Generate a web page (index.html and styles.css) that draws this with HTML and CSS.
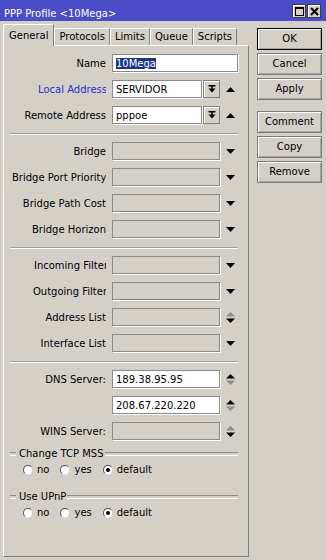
FILE: index.html
```html
<!DOCTYPE html>
<html>
<head>
<meta charset="utf-8">
<title>PPP Profile</title>
<link rel="stylesheet" href="styles.css">
</head>
<body>
<div class="titlebar">
  <span class="title">PPP Profile &lt;10Mega&gt;</span>
  <div class="tbtns">
    <span class="tbtn"><svg width="9" height="9" viewBox="0 0 9 9"><rect x="0.5" y="0.5" width="8" height="8" fill="none" stroke="#000" stroke-width="1"/><rect x="0" y="0" width="9" height="2" fill="#000"/></svg></span>
    <span class="tbtn"><svg width="9" height="9" viewBox="0 0 9 9"><path d="M1 1 L8 8 M8 1 L1 8" stroke="#000" stroke-width="2" fill="none"/></svg></span>
  </div>
</div>
<div class="main">
  <div class="left">
    <div class="tabs">
      <div class="tab active">General</div>
      <div class="tab">Protocols</div>
      <div class="tab">Limits</div>
      <div class="tab">Queue</div>
      <div class="tab">Scripts</div>
    </div>
    <div class="panel">
      <div class="row">
        <div class="lbl"><span>Name</span></div>
        <div class="field wide"><span class="sel">10Mega</span></div>
      </div>
      <div class="row">
        <div class="lbl blue"><span class="cut1">Local Address</span></div>
        <div class="field short">SERVIDOR</div>
        <div class="ddbtn"><svg width="8" height="8" viewBox="0 0 8 8"><rect x="0.5" y="0" width="7" height="1.5" fill="#000"/><rect x="3.25" y="1" width="1.5" height="3" fill="#000"/><polygon points="0.5,3.5 7.5,3.5 4,7.5" fill="#000"/></svg></div>
        <div class="arr"><svg width="9" height="5" viewBox="0 0 9 5"><polygon points="0,5 4.5,0 9,5" fill="#000"/></svg></div>
      </div>
      <div class="row">
        <div class="lbl"><span>Remote Address</span></div>
        <div class="field short">pppoe</div>
        <div class="ddbtn"><svg width="8" height="8" viewBox="0 0 8 8"><rect x="0.5" y="0" width="7" height="1.5" fill="#000"/><rect x="3.25" y="1" width="1.5" height="3" fill="#000"/><polygon points="0.5,3.5 7.5,3.5 4,7.5" fill="#000"/></svg></div>
        <div class="arr"><svg width="9" height="5" viewBox="0 0 9 5"><polygon points="0,5 4.5,0 9,5" fill="#000"/></svg></div>
      </div>
      <div class="sep"></div>
      <div class="row">
        <div class="lbl"><span>Bridge</span></div>
        <div class="field mid off"></div>
        <div class="arr"><svg width="9" height="5" viewBox="0 0 9 5"><polygon points="0,0 9,0 4.5,5" fill="#000"/></svg></div>
      </div>
      <div class="row">
        <div class="lbl"><span>Bridge Port Priority</span></div>
        <div class="field mid off"></div>
        <div class="arr"><svg width="9" height="5" viewBox="0 0 9 5"><polygon points="0,0 9,0 4.5,5" fill="#000"/></svg></div>
      </div>
      <div class="row">
        <div class="lbl"><span>Bridge Path Cost</span></div>
        <div class="field mid off"></div>
        <div class="arr"><svg width="9" height="5" viewBox="0 0 9 5"><polygon points="0,0 9,0 4.5,5" fill="#000"/></svg></div>
      </div>
      <div class="row">
        <div class="lbl"><span>Bridge Horizon</span></div>
        <div class="field mid off"></div>
        <div class="arr"><svg width="9" height="5" viewBox="0 0 9 5"><polygon points="0,0 9,0 4.5,5" fill="#000"/></svg></div>
      </div>
      <div class="sep"></div>
      <div class="row">
        <div class="lbl"><span class="cut2">Incoming Filter</span></div>
        <div class="field mid off"></div>
        <div class="arr"><svg width="9" height="5" viewBox="0 0 9 5"><polygon points="0,0 9,0 4.5,5" fill="#000"/></svg></div>
      </div>
      <div class="row">
        <div class="lbl"><span class="cut1">Outgoing Filter</span></div>
        <div class="field mid off"></div>
        <div class="arr"><svg width="9" height="5" viewBox="0 0 9 5"><polygon points="0,0 9,0 4.5,5" fill="#000"/></svg></div>
      </div>
      <div class="row">
        <div class="lbl"><span>Address List</span></div>
        <div class="field mid off"></div>
        <div class="arr"><svg width="9" height="11" viewBox="0 0 9 11"><polygon points="0,4.5 4.5,0 9,4.5" class="gray"/><polygon points="0,6.5 9,6.5 4.5,11" fill="#000"/></svg></div>
      </div>
      <div class="row">
        <div class="lbl"><span>Interface List</span></div>
        <div class="field mid off"></div>
        <div class="arr"><svg width="9" height="5" viewBox="0 0 9 5"><polygon points="0,0 9,0 4.5,5" fill="#000"/></svg></div>
      </div>
      <div class="sep"></div>
      <div class="row">
        <div class="lbl"><span>DNS Server:</span></div>
        <div class="field mid">189.38.95.95</div>
        <div class="arr"><svg width="9" height="11" viewBox="0 0 9 11"><polygon points="0,4.5 4.5,0 9,4.5" fill="#000"/><polygon points="0,6.5 9,6.5 4.5,11" class="gray"/></svg></div>
      </div>
      <div class="row">
        <div class="lbl"><span></span></div>
        <div class="field mid">208.67.220.220</div>
        <div class="arr"><svg width="9" height="11" viewBox="0 0 9 11"><polygon points="0,4.5 4.5,0 9,4.5" fill="#000"/><polygon points="0,6.5 9,6.5 4.5,11" class="gray"/></svg></div>
      </div>
      <div class="row">
        <div class="lbl"><span>WINS Server:</span></div>
        <div class="field mid off"></div>
        <div class="arr"><svg width="9" height="11" viewBox="0 0 9 11"><polygon points="0,4.5 4.5,0 9,4.5" class="gray"/><polygon points="0,6.5 9,6.5 4.5,11" fill="#000"/></svg></div>
      </div>
      <div class="grp">
        <div class="gtitle">Change TCP MSS</div>
        <div class="radios">
          <span class="opt"><span class="radio"></span>no</span>
          <span class="opt"><span class="radio"></span>yes</span>
          <span class="opt"><span class="radio on"></span>default</span>
        </div>
      </div>
      <div class="grp">
        <div class="gtitle">Use UPnP</div>
        <div class="radios">
          <span class="opt"><span class="radio"></span>no</span>
          <span class="opt"><span class="radio"></span>yes</span>
          <span class="opt"><span class="radio on"></span>default</span>
        </div>
      </div>
    </div>
  </div>
  <div class="right">
    <div class="btn def">OK</div>
    <div class="btn">Cancel</div>
    <div class="btn">Apply</div>
    <div class="btn gapped">Comment</div>
    <div class="btn">Copy</div>
    <div class="btn">Remove</div>
  </div>
</div>
</body>
</html>
```
FILE: styles.css
```css
* { box-sizing: border-box; }
html, body { margin: 0; padding: 0; }
body {
  width: 326px;
  height: 560px;
  overflow: hidden;
  background: #d4d0c8;
  font-family: "DejaVu Sans", sans-serif;
  font-size: 10px;
  color: #000;
}

.titlebar {
  height: 21px;
  background: #4b4cc8;
  display: flex;
  justify-content: space-between;
  align-items: flex-start;
  padding: 0 5px 0 4px;
}
.title {
  color: #fff;
  line-height: 12px;
  margin-top: 8px;
  white-space: nowrap;
}
.tbtns {
  display: flex;
  gap: 1px;
  margin-top: 4px;
}
.tbtn {
  width: 14px;
  height: 14px;
  background: #d4d0c8;
  border: 1px solid #404040;
  box-shadow: inset 1px 1px 0 #fff;
  display: flex;
  align-items: center;
  justify-content: center;
}

.main {
  display: flex;
  padding: 3px 0 0 3px;
}
.left { width: 246px; }

.tabs {
  display: flex;
  align-items: flex-end;
  height: 21px;
}
.tab {
  height: 17px;
  line-height: 15px;
  padding: 0 4px;
  border-top: 1px solid #fff;
  border-left: 1px solid #fff;
  border-right: 1px solid #808080;
  white-space: nowrap;
}
.tab.active {
  height: 22px;
  line-height: 21px;
  margin-bottom: -1px;
  padding: 0 5px;
  background: #d4d0c8;
  position: relative;
  z-index: 1;
}

.panel {
  height: 512px;
  border-top: 1px solid #fff;
  border-left: 1px solid #fff;
  border-right: 1px solid #808080;
  border-bottom: 1px solid #808080;
  padding: 8px 6px 0 6px;
  display: flex;
  flex-direction: column;
  gap: 8px;
}

.row {
  display: flex;
  align-items: center;
  height: 18px;
  width: 228px;
}
.lbl {
  width: 94px;
  margin-left: 2px;
  margin-right: 6px;
  display: flex;
  overflow: hidden;
  white-space: nowrap;
  line-height: 17px;
  padding-top: 1px;
  height: 18px;
}
.lbl span { margin-left: auto; flex-shrink: 0; }
.lbl span.cut1 { margin-right: -1px; }
.lbl span.cut2 { margin-right: -2px; }
.lbl.blue { color: #2b2bd4; }

.field {
  height: 18px;
  background: #fff;
  border: 1px solid #8a8a8a;
  box-shadow: 1px 1px 0 #fff;
  padding: 0 3px;
  line-height: 17px;
  white-space: nowrap;
  overflow: hidden;
}
.field.wide { width: 126px; }
.field.short { width: 90px; }
.field.mid { width: 108px; }
.field.off { background: #d4d0c8; }
.sel {
  background: #1d3389;
  color: #fff;
}

.ddbtn {
  width: 17px;
  height: 18px;
  margin-left: 1px;
  border: 1px solid #808080;
  box-shadow: inset 1px 1px 0 #fff;
  display: flex;
  align-items: center;
  justify-content: center;
}
.arr {
  width: 18px;
  padding-left: 2px;
  display: flex;
  align-items: center;
  justify-content: center;
}
.gray { fill: #8c8c8c; }

.sep {
  width: 228px;
  height: 2px;
  border-top: 1px solid #a09e99;
  border-bottom: 1px solid #fff;
  margin: 1px 0 -1px 0;
}

.grp { padding-bottom: 6px; }
.gtitle {
  display: flex;
  align-items: center;
  width: 228px;
  height: 11px;
  line-height: 11px;
  white-space: nowrap;
}
.gtitle::before,
.gtitle::after {
  content: "";
  height: 2px;
  border-top: 1px solid #8c8c8c;
  border-bottom: 1px solid #fff;
}
.gtitle::before { width: 6px; margin-right: 3px; }
.gtitle::after { flex: 1; margin-left: 1px; }

.radios {
  display: flex;
  align-items: center;
  height: 14px;
  line-height: 14px;
  margin-top: 4px;
  padding-left: 13px;
  gap: 11px;
}
.opt {
  display: flex;
  align-items: center;
  gap: 4px;
}
.radio {
  width: 10px;
  height: 10px;
  border-radius: 50%;
  background: #fff;
  border: 1px solid;
  border-color: #505050 #d0d0d0 #e8e8e8 #505050;
  display: flex;
  align-items: center;
  justify-content: center;
}
.radio.on::after {
  content: "";
  width: 4px;
  height: 4px;
  border-radius: 50%;
  background: #000;
}

.right {
  margin-left: 8px;
  padding-top: 4px;
  width: 65px;
  display: flex;
  flex-direction: column;
  gap: 3px;
}
.btn {
  height: 22px;
  border: 1px solid #7a7a7a;
  box-shadow: inset 1px 1px 0 #fff, inset -1px -1px 0 #a8a5a0;
  text-align: center;
  line-height: 20px;
  white-space: nowrap;
}
.btn.def { border-color: #000; }
.btn.gapped { margin-top: 8px; }
```
